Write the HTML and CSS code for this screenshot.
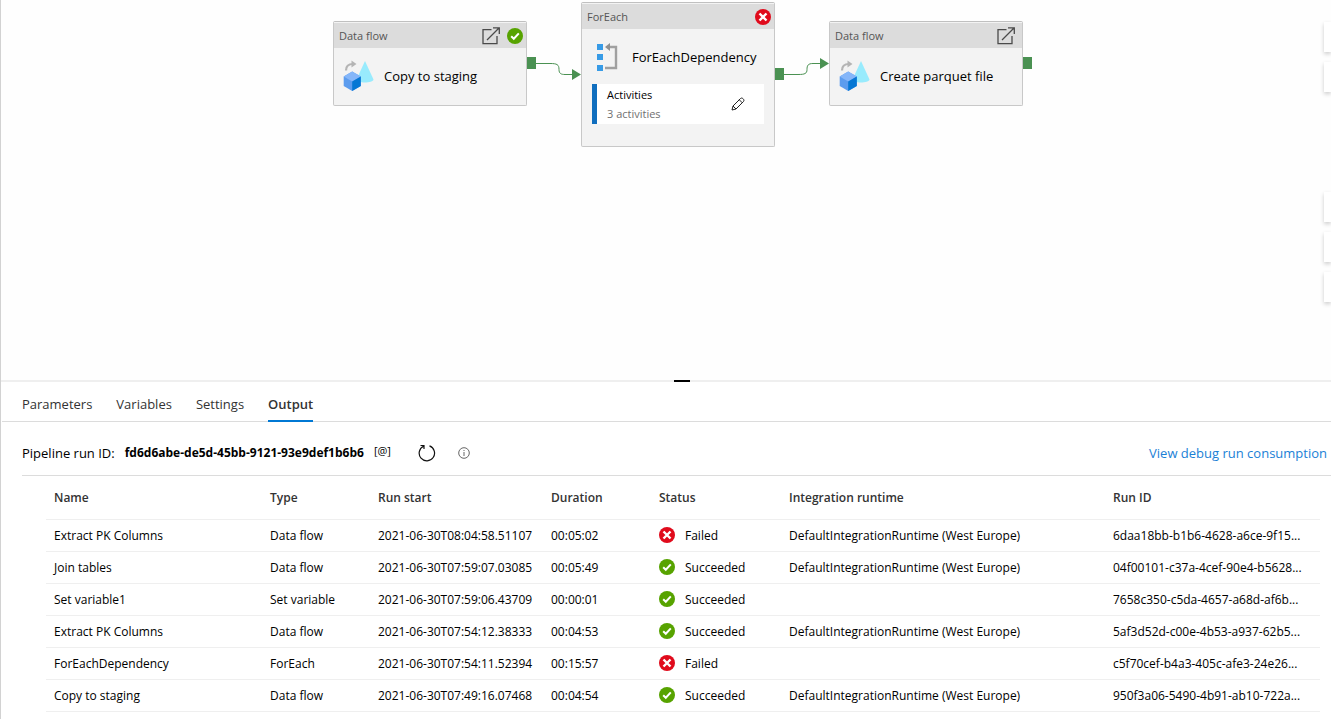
FILE: index.html
```
<!DOCTYPE html>
<html lang="en">
<head>
    <meta charset="UTF-8">
    <meta name="viewport" content="width=device-width, initial-scale=1.0">
    <title>Pipeline output</title>
    <link rel="stylesheet" href="styles.css">
</head>
<body>
<!-- shared icons -->
<svg class="sprite" aria-hidden="true">
    <symbol id="ok" viewBox="0 0 16 16">
        <circle cx="8" cy="8" r="8" fill="#57a300"/>
        <path d="M4.2 8.2l2.6 2.6 5-5.4" fill="none" stroke="#fff" stroke-width="2"/>
    </symbol>
    <symbol id="fail" viewBox="0 0 16 16">
        <circle cx="8" cy="8" r="8" fill="#e00b1c"/>
        <path d="M4.5 4.5l7 7M11.5 4.5l-7 7" fill="none" stroke="#fff" stroke-width="2.4"/>
    </symbol>
    <symbol id="open" viewBox="0 0 18 18">
        <path d="M9.5 2.7H1v14h14V9" fill="none" stroke="#4a4a4a" stroke-width="1.3"/>
        <path d="M5 13L17 1M11 .8h6.3V7" fill="none" stroke="#4a4a4a" stroke-width="1.3"/>
    </symbol>
    <symbol id="dataflow" viewBox="0 0 32 32">
        <path d="M3 10.500C3 6 6 4 10 4" fill="none" stroke="#b4b4b4" stroke-width="2.200"/>
        <path d="M8.500 .5l5 3.500-5 3.500z" fill="#b4b4b4"/>
        <path d="M22 1l8.500 18.500c-.3 4-17 4-17 0z" fill="#98ebfd"/>
        <path d="M9.200 11.500l8.600 5V26l-8.600 5-8.500-5v-9.500z" fill="#5c9cee"/>
        <path d="M9.200 11.500l8.600 5-8.600 4.900-8.500-4.900z" fill="#85b6f9"/>
        <path d="M17.800 16.500V26l-8.600 5v-9.600z" fill="#0577d4"/>
    </symbol>
</svg>

<main class="page">
    <section class="canvas">
        <svg class="links" aria-hidden="true">
            <g fill="none" stroke="#4a9152">
                <path d="M535 63.500h14c7 0 9 1 9 6 0 4 2 5 6 5h8"/>
                <path d="M783 74.500h14c7 0 9-1 9-5s1-6 6-6h7"/>
            </g>
            <g fill="#4a9152">
                <path d="M526 57h9v12h-9zM774 68h9v12h-9zM1022 57h9v12h-9z"/>
                <path d="M571 69l9 5.500-9 5.500zM819 58l9 5.500-9 5.500z"/>
            </g>
        </svg>

        <article class="node copy">
            <header>
                <span>Data flow</span>
                <button type="button" aria-label="Open data flow"><svg width="18" height="18"><use href="#open"/></svg></button>
                <svg width="16" height="16"><use href="#ok"/></svg>
            </header>
            <div class="title">
                <svg width="32" height="32"><use href="#dataflow"/></svg>
                <span>Copy to staging</span>
            </div>
        </article>

        <article class="node foreach">
            <header>
                <span>ForEach</span>
                <svg width="16" height="16"><use href="#fail"/></svg>
            </header>
            <div class="title">
                <svg width="32" height="32" viewBox="0 0 32 32">
                    <path d="M6 3h6v6H6zM6 13h6v6H6zM6 24h6v6H6z" fill="#379be6"/>
                    <path d="M17 6h8v21H14" fill="none" stroke="#a0a0a0" stroke-width="2.400"/>
                    <path d="M14 6l5-4v8z" fill="#909090"/>
                </svg>
                <span>ForEachDependency</span>
            </div>
            <div class="inner">
                <div>
                    <div>Activities</div>
                    <div class="count">3 activities</div>
                </div>
                <button type="button" aria-label="Edit activities">
                    <svg width="14" height="14" viewBox="0 0 14 14" fill="none" stroke="#222">
                        <path d="M1 13l1-4 7.500-7.500c1.500-1.500 4.500 1.200 3 3L5 12zM8.300 2.800l3 3M2 9l3 3"/>
                    </svg>
                </button>
            </div>
        </article>

        <article class="node parquet">
            <header>
                <span>Data flow</span>
                <button type="button" aria-label="Open data flow"><svg width="18" height="18"><use href="#open"/></svg></button>
            </header>
            <div class="title">
                <svg width="32" height="32"><use href="#dataflow"/></svg>
                <span>Create parquet file</span>
            </div>
        </article>

        <div class="tools">
            <button type="button" aria-label="Zoom in"></button>
            <button type="button" aria-label="Zoom out"></button>
            <button type="button" class="apart" aria-label="Fit to screen"></button>
            <button type="button" aria-label="Auto align"></button>
            <button type="button" aria-label="Select"></button>
        </div>
    </section>

    <div class="splitter"></div>

    <section class="panel">
        <nav class="tabs">
            <a href="#parameters">Parameters</a>
            <a href="#variables">Variables</a>
            <a href="#settings">Settings</a>
            <a href="#output" class="active">Output</a>
        </nav>

        <div class="run" id="output">
            <span>Pipeline run ID:</span>
            <strong>fd6d6abe-de5d-45bb-9121-93e9def1b6b6</strong>
            <button type="button" class="at">[@]</button>
            <button type="button" class="refresh" aria-label="Refresh">
                <svg width="18" height="18" viewBox="0 0 18 18" fill="none" stroke="#111" stroke-width="1.200">
                    <path d="M11.500 1.900A7.700 7.700 0 1 1 5.500 2.200M2.500 1.500H6V5"/>
                </svg>
            </button>
            <button type="button" class="info" aria-label="Info">
                <svg width="12" height="12" viewBox="0 0 12 12" fill="none" stroke="#666">
                    <circle cx="6" cy="6" r="5.300"/>
                    <path d="M6 5v4M6 3v1"/>
                </svg>
            </button>
            <a href="#consumption">View debug run consumption</a>
        </div>

        <div class="results">
            <table>
                <colgroup>
                    <col class="c-name">
                    <col class="c-type">
                    <col class="c-start">
                    <col class="c-duration">
                    <col class="c-status">
                    <col class="c-runtime">
                    <col>
                </colgroup>
                <thead>
                    <tr>
                        <th>Name</th>
                        <th>Type</th>
                        <th>Run start</th>
                        <th>Duration</th>
                        <th>Status</th>
                        <th>Integration runtime</th>
                        <th>Run ID</th>
                    </tr>
                </thead>
                <tbody>
                    <tr>
                        <td>Extract PK Columns</td>
                        <td>Data flow</td>
                        <td>2021-06-30T08:04:58.51107</td>
                        <td>00:05:02</td>
                        <td><div class="status"><svg width="16" height="16"><use href="#fail"/></svg>Failed</div></td>
                        <td>DefaultIntegrationRuntime (West Europe)</td>
                        <td>6daa18bb-b1b6-4628-a6ce-9f15...</td>
                    </tr>
                    <tr>
                        <td>Join tables</td>
                        <td>Data flow</td>
                        <td>2021-06-30T07:59:07.03085</td>
                        <td>00:05:49</td>
                        <td><div class="status"><svg width="16" height="16"><use href="#ok"/></svg>Succeeded</div></td>
                        <td>DefaultIntegrationRuntime (West Europe)</td>
                        <td>04f00101-c37a-4cef-90e4-b5628...</td>
                    </tr>
                    <tr>
                        <td>Set variable1</td>
                        <td>Set variable</td>
                        <td>2021-06-30T07:59:06.43709</td>
                        <td>00:00:01</td>
                        <td><div class="status"><svg width="16" height="16"><use href="#ok"/></svg>Succeeded</div></td>
                        <td></td>
                        <td>7658c350-c5da-4657-a68d-af6b...</td>
                    </tr>
                    <tr>
                        <td>Extract PK Columns</td>
                        <td>Data flow</td>
                        <td>2021-06-30T07:54:12.38333</td>
                        <td>00:04:53</td>
                        <td><div class="status"><svg width="16" height="16"><use href="#ok"/></svg>Succeeded</div></td>
                        <td>DefaultIntegrationRuntime (West Europe)</td>
                        <td>5af3d52d-c00e-4b53-a937-62b5...</td>
                    </tr>
                    <tr>
                        <td>ForEachDependency</td>
                        <td>ForEach</td>
                        <td>2021-06-30T07:54:11.52394</td>
                        <td>00:15:57</td>
                        <td><div class="status"><svg width="16" height="16"><use href="#fail"/></svg>Failed</div></td>
                        <td></td>
                        <td>c5f70cef-b4a3-405c-afe3-24e26...</td>
                    </tr>
                    <tr>
                        <td>Copy to staging</td>
                        <td>Data flow</td>
                        <td>2021-06-30T07:49:16.07468</td>
                        <td>00:04:54</td>
                        <td><div class="status"><svg width="16" height="16"><use href="#ok"/></svg>Succeeded</div></td>
                        <td>DefaultIntegrationRuntime (West Europe)</td>
                        <td>950f3a06-5490-4b91-ab10-722a...</td>
                    </tr>
                </tbody>
            </table>
        </div>
    </section>
</main>
</body>
</html>
```
FILE: styles.css
```
* {
    box-sizing: border-box;
}

body {
    margin: 0;
    font-family: "Segoe UI", "Open Sans", sans-serif;
    font-size: 12px;
    line-height: 18px;
    color: #000;
    background-color: #fff;
}

button {
    display: flex;
    padding: 0;
    border: none;
    background: none;
    font: inherit;
    color: inherit;
    cursor: pointer;
}

a {
    text-decoration: none;
}

svg {
    display: block;
    flex-shrink: 0;
}

.sprite {
    position: absolute;
    width: 0;
    height: 0;
}

.page {
    min-height: 100vh;
    border-left: 1px solid #d2d2d2;
}

/* canvas */
.canvas {
    position: relative;
    height: 380px;
    overflow: hidden;
    background-color: #fefefe;
}

.links {
    position: absolute;
    width: 100%;
    height: 100%;
}

.node {
    position: absolute;
    width: 194px;
    border: 1px solid #c8c8c8;
    border-top-color: #c0c0c0;
    border-radius: 2px;
    background-color: #f3f3f3;
}

.copy {
    left: 332px;
    top: 21px;
    height: 85px;
}

.foreach {
    left: 580px;
    top: 2px;
    height: 145px;
}

.parquet {
    left: 828px;
    top: 21px;
    height: 85px;
}

.node header {
    display: flex;
    align-items: center;
    gap: 7px;
    height: 26px;
    padding: 1px 3px 0 5px;
    border-top: 1px solid #f3f3f3;
    background-color: #dcdcdc;
    color: #555;
    font-size: 11px;
}

.node header span {
    flex: 1;
}

.parquet header {
    padding-right: 7px;
}

.title {
    display: flex;
    align-items: center;
    gap: 9px;
    height: 55px;
    padding-left: 9px;
    font-size: 13px;
}

.inner {
    display: flex;
    align-items: center;
    justify-content: space-between;
    height: 40px;
    margin: 0 10px;
    padding: 0 19px 0 10px;
    border-left: 5px solid #106ebe;
    background-color: #fff;
    font-size: 11px;
    line-height: 19px;
}

.count {
    color: #707070;
}

.tools {
    position: absolute;
    top: 22px;
    right: 0;
    display: flex;
    flex-direction: column;
    gap: 10px;
}

.tools button {
    width: 7px;
    height: 30px;
    background-color: #fff;
    box-shadow: 0 2px 4px rgba(0,0,0,0.2);
}

.tools .apart {
    margin-top: 90px;
}

.splitter {
    position: relative;
    height: 2px;
    background-color: #efefef;
}

.splitter::after {
    content: "";
    position: absolute;
    left: calc(50% + 8px);
    width: 16px;
    height: 2px;
    background-color: #000;
}

/* bottom panel */
.tabs {
    display: flex;
    gap: 24px;
    height: 40px;
    margin-left: 1px;
    padding-left: 20px;
    border-bottom: 1px solid #dcdcdc;
    font-size: 13px;
    line-height: 44px;
}

.tabs a {
    height: 40px;
    color: #333;
}

.tabs .active {
    border-bottom: 2px solid #0078d4;
    font-weight: 600;
}

.run {
    display: flex;
    align-items: center;
    height: 54px;
    margin-left: 21px;
    padding: 8px 4px 0 0;
    border-bottom: 1px solid #dcdcdc;
    font-size: 13px;
}

.run strong {
    margin-left: 10px;
    font-size: 12px;
}

.run .at {
    margin: 0 27px 4px 10px;
    font-size: 11px;
    line-height: 16px;
}

.run .info {
    margin-left: 22px;
}

.run a {
    margin-left: auto;
    color: #1a7fd6;
}

.results {
    padding: 0 11px 0 45px;
}

table {
    width: 100%;
    table-layout: fixed;
    border-collapse: collapse;
}

.c-name {
    width: 216px;
}

.c-type,
.c-duration {
    width: 108px;
}

.c-start {
    width: 173px;
}

.c-status {
    width: 130px;
}

.c-runtime {
    width: 324px;
}

th,
td {
    height: 32px;
    padding: 2px 8px 0;
    border-bottom: 1px solid #efefef;
    text-align: left;
    white-space: nowrap;
    overflow: hidden;
}

th {
    height: 43px;
    color: #333;
    font-weight: 600;
}

.status {
    display: flex;
    align-items: flex-start;
    gap: 10px;
}
```
